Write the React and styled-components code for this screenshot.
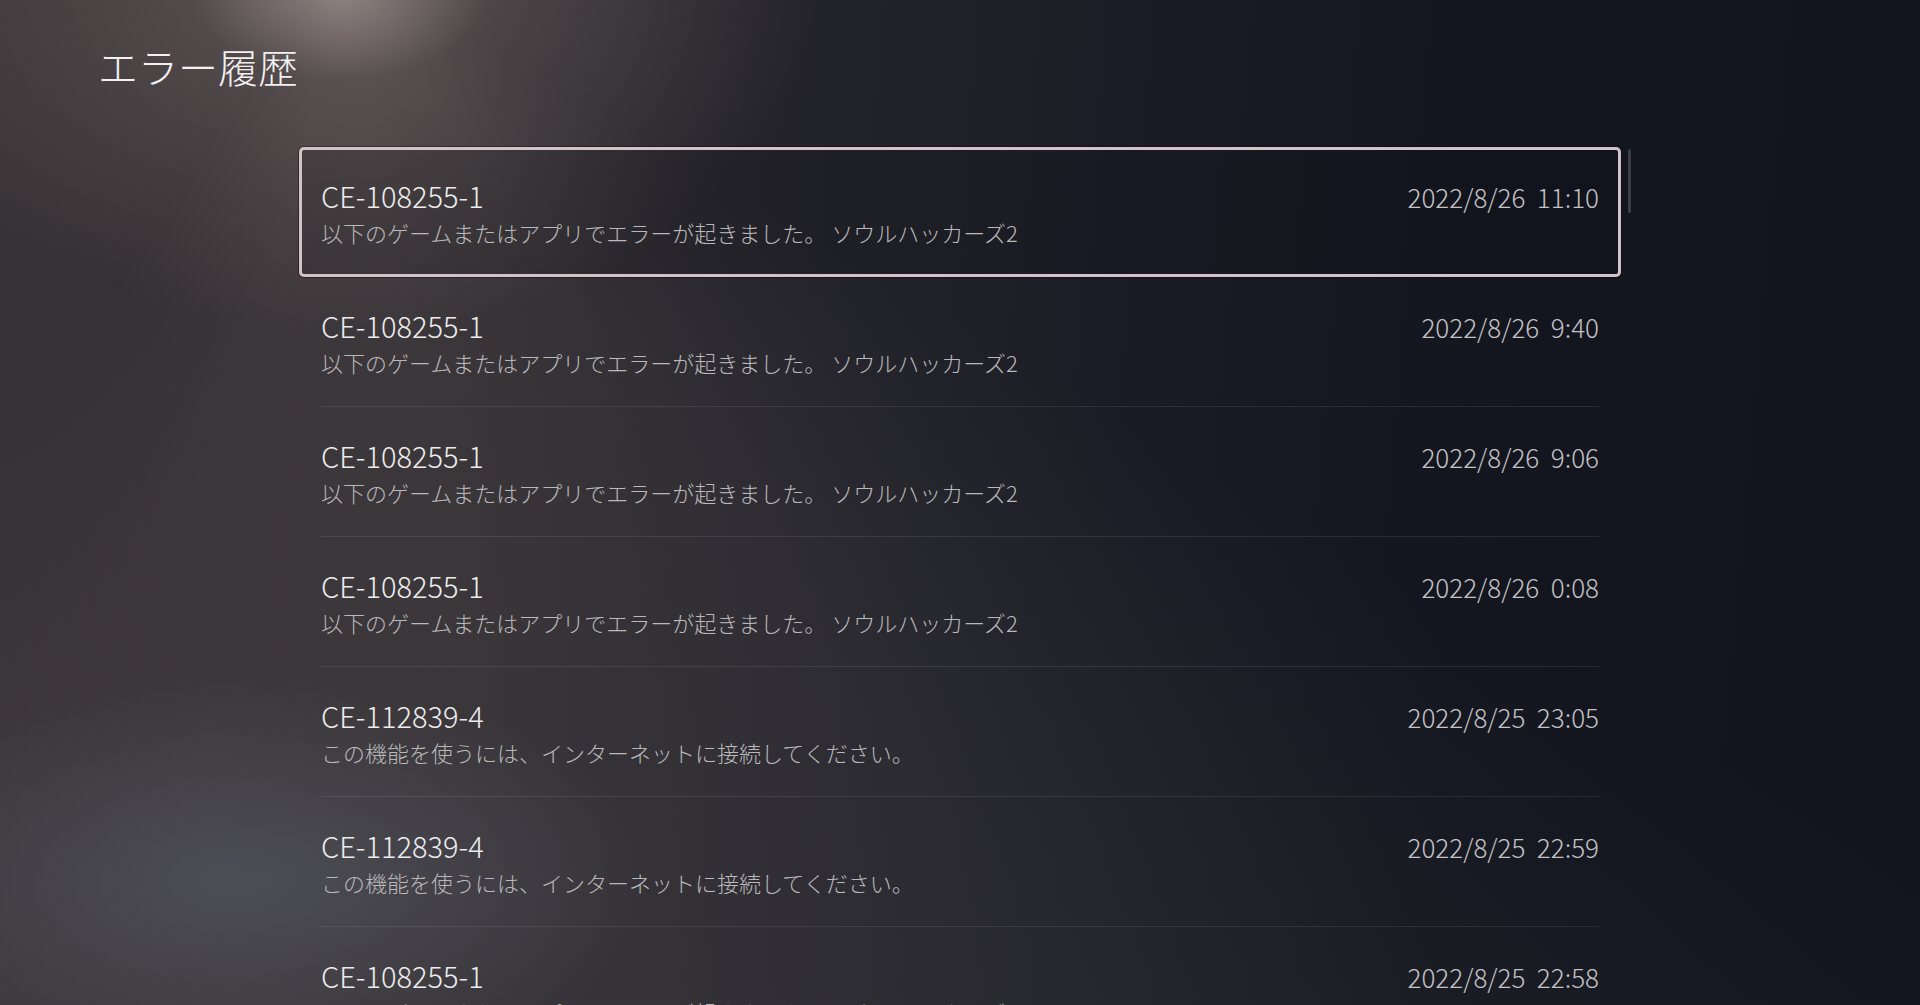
import React from "react";
import styled, { createGlobalStyle } from "styled-components";

const GlobalStyle = createGlobalStyle`
  html, body { margin: 0; padding: 0; background: #13161f; }
  body { font-family: "Noto Sans CJK JP", "Noto Sans", sans-serif; -webkit-font-smoothing: antialiased; }
  * { box-sizing: border-box; }
`;

const Screen = styled.div`
  width: 1920px;
  height: 1005px;
  overflow: hidden;
  background:
    radial-gradient(ellipse 150px 90px at 340px -10px, rgba(175, 160, 156, 0.6), rgba(175, 160, 156, 0) 100%),
    radial-gradient(ellipse 480px 360px at 340px -30px, rgba(140, 125, 121, 0.5), rgba(140, 125, 121, 0) 100%),
    conic-gradient(from 120deg at 340px -40px,
      rgba(110, 100, 100, 0) 0deg,
      rgba(110, 100, 100, 0.16) 25deg,
      rgba(110, 100, 100, 0.22) 50deg,
      rgba(110, 100, 100, 0.18) 70deg,
      rgba(110, 100, 100, 0) 95deg,
      rgba(110, 100, 100, 0) 360deg),
    radial-gradient(ellipse 420px 200px at 240px 880px, rgba(90, 100, 116, 0.5), rgba(90, 100, 116, 0) 100%),
    linear-gradient(95deg, #383336 0%, #302c30 18%, #25242b 38%, #1a1c25 58%, #13161f 75%, #12151e 100%);
  display: flex;
  flex-direction: column;
`;

const Title = styled.h1`
  margin: 42px 0 0 98px;
  font-size: 40px;
  line-height: 48px;
  font-weight: 300;
  color: #f2f0f0;
  letter-spacing: 0;
`;

const ListArea = styled.div`
  display: flex;
  align-items: flex-start;
  gap: 7px;
  margin: 57px 0 0 299px;
`;

const List = styled.div`
  width: 1322px;
  display: flex;
  flex-direction: column;
`;

const ScrollBar = styled.div`
  width: 3px;
  height: 64px;
  margin-top: 2px;
  border-radius: 2px;
  background: #3b3e4a;
`;

const Row = styled.div`
  height: 130px;
  flex-shrink: 0;
  padding: 0 22px;
  border-radius: 5px;
  box-shadow: ${(p) =>
    p.$focused
      ? "inset 0 0 0 3px #d3c3c9, 0 0 0 1px rgba(0,0,0,0.35)"
      : "none"};
  background: ${(p) => (p.$focused ? "rgba(12, 14, 22, 0.15)" : "transparent")};
`;

const RowInner = styled.div`
  height: 100%;
  padding-top: 30px;
  border-bottom: 1px solid ${(p) => (p.$divider ? "rgba(255,255,255,0.09)" : "transparent")};
  display: flex;
  flex-direction: column;
`;

const TopLine = styled.div`
  display: flex;
  justify-content: space-between;
  align-items: baseline;
`;

const Code = styled.div`
  font-size: 29px;
  line-height: 36px;
  font-weight: 300;
  color: #ececec;
`;

const DateText = styled.div`
  font-size: 26px;
  line-height: 36px;
  font-weight: 300;
  color: #c4c2c4;
  white-space: pre;
`;

const Desc = styled.div`
  margin-top: 2px;
  font-size: 22px;
  line-height: 30px;
  font-weight: 300;
  color: #b9b8ba;
  white-space: pre;
`;

const GAME = "以下のゲームまたはアプリでエラーが起きました。 ソウルハッカーズ2";
const NET = "この機能を使うには、インターネットに接続してください。";

const items = [
  { code: "CE-108255-1", desc: GAME, date: "2022/8/26  11:10" },
  { code: "CE-108255-1", desc: GAME, date: "2022/8/26  9:40" },
  { code: "CE-108255-1", desc: GAME, date: "2022/8/26  9:06" },
  { code: "CE-108255-1", desc: GAME, date: "2022/8/26  0:08" },
  { code: "CE-112839-4", desc: NET, date: "2022/8/25  23:05" },
  { code: "CE-112839-4", desc: NET, date: "2022/8/25  22:59" },
  { code: "CE-108255-1", desc: GAME, date: "2022/8/25  22:58" },
];

export default function App() {
  return (
    <>
      <GlobalStyle />
      <Screen>
        <Title>エラー履歴</Title>
        <ListArea>
          <List>
            {items.map((it, i) => (
              <Row key={i} $focused={i === 0}>
                <RowInner $divider={i !== 0}>
                  <TopLine>
                    <Code>{it.code}</Code>
                    <DateText>{it.date}</DateText>
                  </TopLine>
                  <Desc>{it.desc}</Desc>
                </RowInner>
              </Row>
            ))}
          </List>
          <ScrollBar />
        </ListArea>
      </Screen>
    </>
  );
}
